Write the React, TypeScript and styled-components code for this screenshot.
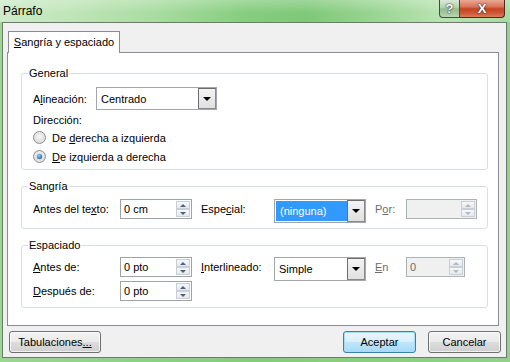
import React from 'react';
import styled, { createGlobalStyle, css } from 'styled-components';

const GlobalStyle = createGlobalStyle`
  html, body {
    margin: 0;
    padding: 0;
    background: #ffffff;
  }
  body {
    font-family: 'Liberation Sans', Arial, sans-serif;
    font-size: 11px;
    color: #000000;
  }
  * {
    box-sizing: border-box;
  }
`;

const Window = styled.div`
  width: 510px;
  height: 362px;
  display: flex;
  flex-direction: column;
  background: linear-gradient(to right, #9bd692, #84cb7d 50%, #92d189);
`;

const TitleBar = styled.div`
  height: 22px;
  display: flex;
  align-items: flex-start;
  padding-right: 5px;
  background:
    linear-gradient(to bottom, rgba(255, 255, 255, 0.25), rgba(255, 255, 255, 0) 60%),
    linear-gradient(
      to right,
      #cdebc8 0%,
      #bfe5b8 14%,
      #a9dca1 30%,
      #86cd7f 48%,
      #7ec878 60%,
      #9bd593 74%,
      #b8e3b1 86%,
      #a7db9f 100%
    );
`;

const Title = styled.div`
  flex: 1;
  padding: 4px 0 0 3px;
  font-size: 12px;
  color: #000000;
`;

const CaptionButton = styled.div<{ $close?: boolean }>`
  height: 18px;
  display: flex;
  align-items: center;
  justify-content: center;
  color: #ffffff;
  font-weight: bold;
  font-size: 13px;
  border: 1px solid #3e4f3c;
  border-top: none;
  text-shadow: 0 0 2px #2b2b2b, 0 0 1px #2b2b2b;
  ${(p) =>
    p.$close
      ? css`
          width: 45px;
          border-left: none;
          border-radius: 0 0 4px 0;
          border-color: #4a2a22;
          background: linear-gradient(to bottom, #e9a995 0%, #d8735a 40%, #c4451f 52%, #cf5b3a 80%, #de7c5f 100%);
        `
      : css`
          width: 21px;
          border-radius: 0 0 0 4px;
          background: linear-gradient(to bottom, #d9ead6 0%, #b3d2ae 45%, #94bc8f 52%, #a6c9a1 80%, #bad8b5 100%);
        `}
`;

const Client = styled.div`
  flex: 1;
  margin: 0 3px 4px 2px;
  border: 1px solid #6f7a6e;
  background: #f0f0f0;
  display: flex;
  flex-direction: column;
  padding: 8px 7px 0 4px;
`;

const TabStrip = styled.div`
  display: flex;
  padding-left: 1px;
`;

const Tab = styled.div`
  width: 112px;
  height: 22px;
  margin-bottom: -1px;
  position: relative;
  z-index: 1;
  background: #ffffff;
  border: 1px solid #898c95;
  border-bottom: none;
  display: flex;
  align-items: center;
  justify-content: center;
  padding-bottom: 1px;
`;

const Panel = styled.div`
  height: 274px;
  background: #ffffff;
  border: 1px solid #898c95;
  padding: 13px 10px 0 13px;
  display: flex;
  flex-direction: column;
  gap: 9px;
`;

const Group = styled.fieldset<{ $h: number }>`
  margin: 0;
  min-inline-size: 0;
  height: ${(p) => p.$h}px;
  border: 1px solid #d5dfe5;
  border-radius: 3px;
  padding: 0 8px 0 11px;
`;

const Legend = styled.legend`
  padding: 0 1px;
  margin-left: -5px;
  line-height: 14px;
`;

const Row = styled.div<{ $top?: number }>`
  display: flex;
  align-items: center;
  margin-top: ${(p) => p.$top ?? 0}px;
`;

const Label = styled.span<{ $w?: number; $disabled?: boolean }>`
  display: inline-block;
  width: ${(p) => (p.$w ? `${p.$w}px` : 'auto')};
  color: ${(p) => (p.$disabled ? '#6d6d6d' : '#000000')};
  white-space: nowrap;
`;

const U = styled.span`
  text-decoration: underline;
`;

const Combo = styled.div<{ $w: number; $h: number }>`
  width: ${(p) => p.$w}px;
  height: ${(p) => p.$h}px;
  display: flex;
  border: 1px solid #a3a7ab;
  background: #ffffff;
`;

const ComboText = styled.div<{ $selected?: boolean }>`
  flex: 1;
  display: flex;
  align-items: center;
  padding-left: 4px;
  ${(p) =>
    p.$selected &&
    css`
      background: #3399ff;
      color: #ffffff;
      margin: 1px 0 1px 1px;
    `}
`;

const ComboButton = styled.div`
  width: 18px;
  display: flex;
  align-items: center;
  justify-content: center;
  border: 1px solid #6d6d6d;
  border-right-color: #8a8a8a;
  border-bottom-color: #8a8a8a;
  background: linear-gradient(to bottom, #f4f4f4, #e0e0e0);

  &::after {
    content: '';
    border-left: 4px solid transparent;
    border-right: 4px solid transparent;
    border-top: 4px solid #000000;
  }
`;

const Spin = styled.div<{ $w: number; $disabled?: boolean }>`
  width: ${(p) => p.$w}px;
  height: 20px;
  display: flex;
  border: 1px solid ${(p) => (p.$disabled ? '#adb2b5' : '#9ea3a8')};
  background: ${(p) => (p.$disabled ? '#f0f0f0' : '#ffffff')};
  color: ${(p) => (p.$disabled ? '#6d6d6d' : '#000000')};
`;

const SpinValue = styled.div`
  flex: 1;
  display: flex;
  align-items: center;
  padding-left: 3px;
`;

const SpinButtons = styled.div`
  width: 15px;
  display: flex;
  flex-direction: column;
  padding: 1px 1px 1px 0;
`;

const SpinArrow = styled.div<{ $down?: boolean; $disabled?: boolean }>`
  flex: 1;
  display: flex;
  align-items: center;
  justify-content: center;
  border: 1px solid #c9cfd6;
  background: linear-gradient(to bottom, #f7f8fa, #e4e8ed);

  &::after {
    content: '';
    border-left: 3px solid transparent;
    border-right: 3px solid transparent;
    ${(p) =>
      p.$down
        ? css`border-top: 3px solid ${p.$disabled ? '#b4b8bd' : '#4d6185'};`
        : css`border-bottom: 3px solid ${p.$disabled ? '#b4b8bd' : '#4d6185'};`}
  }
`;

const RadioRow = styled.div<{ $top: number }>`
  display: flex;
  align-items: center;
  margin-top: ${(p) => p.$top}px;
  gap: 6px;
`;

const RadioCircle = styled.span<{ $checked?: boolean }>`
  width: 13px;
  height: 13px;
  border-radius: 50%;
  border: 1px solid #8e8f8f;
  background: radial-gradient(circle at 50% 40%, #f4f4f4, #d6d6d6);
  display: flex;
  align-items: center;
  justify-content: center;

  ${(p) =>
    p.$checked &&
    css`
      &::after {
        content: '';
        width: 5px;
        height: 5px;
        border-radius: 50%;
        background: radial-gradient(circle at 40% 35%, #8fd6ff, #1c6fb5 70%, #144f86);
        box-shadow: 0 0 1px #1a5da0;
      }
    `}
`;

const Grid = styled.div<{ $top: number }>`
  display: grid;
  grid-template-columns: 87px 81px 73px 101px 31px auto;
  grid-auto-rows: 20px;
  row-gap: 4px;
  align-items: start;
  margin-top: ${(p) => p.$top}px;
`;

const Cell = styled.div`
  height: 20px;
  display: flex;
  align-items: center;
`;

const Footer = styled.div`
  flex: 1;
  display: flex;
  align-items: flex-start;
  padding: 5px 0 0 2px;
  margin-right: -2px;
  gap: 12px;
`;

const Button = styled.button<{ $w: number; $default?: boolean; $push?: boolean }>`
  width: ${(p) => p.$w}px;
  height: 22px;
  font-family: inherit;
  font-size: 11px;
  color: #000000;
  border: 1px solid #707070;
  border-radius: 3px;
  padding: 0 0 1px;
  margin-left: ${(p) => (p.$push ? 'auto' : '0')};
  background: linear-gradient(to bottom, #f2f2f2 0%, #ebebeb 48%, #dddddd 52%, #cfcfcf 100%);
  box-shadow: inset 0 0 0 1px rgba(255, 255, 255, 0.7);
  ${(p) =>
    p.$default &&
    css`
      border-color: #3c7fb1;
      box-shadow: inset 0 0 0 1px #a6dcf5;
      background: linear-gradient(to bottom, #eaf6fd 0%, #d9f0fc 48%, #bee6fd 52%, #a7d9f5 100%);
    `}
`;

type SpinBoxProps = { value: string; width: number; disabled?: boolean };

const SpinBox = ({ value, width, disabled }: SpinBoxProps) => (
  <Spin $w={width} $disabled={disabled}>
    <SpinValue>{value}</SpinValue>
    <SpinButtons>
      <SpinArrow $disabled={disabled} />
      <SpinArrow $down $disabled={disabled} />
    </SpinButtons>
  </Spin>
);

type ComboBoxProps = { value: string; width: number; height: number; selected?: boolean };

const ComboBox = ({ value, width, height, selected }: ComboBoxProps) => (
  <Combo $w={width} $h={height}>
    <ComboText $selected={selected}>{value}</ComboText>
    <ComboButton />
  </Combo>
);

const App = () => {
  return (
    <Window>
      <GlobalStyle />
      <TitleBar>
        <Title>Párrafo</Title>
        <CaptionButton>?</CaptionButton>
        <CaptionButton $close>X</CaptionButton>
      </TitleBar>
      <Client>
        <TabStrip>
          <Tab>
            <span>
              <U>S</U>angría y espaciado
            </span>
          </Tab>
        </TabStrip>
        <Panel>
          <Group $h={104}>
            <Legend>General</Legend>
            <Row $top={7}>
              <Label $w={63}>
                A<U>l</U>ineación:
              </Label>
              <ComboBox value="Centrado" width={121} height={23} />
            </Row>
            <Row $top={4}>
              <Label>Dirección:</Label>
            </Row>
            <RadioRow $top={5}>
              <RadioCircle />
              <Label>
                De <U>d</U>erecha a izquierda
              </Label>
            </RadioRow>
            <RadioRow $top={6}>
              <RadioCircle $checked />
              <Label>
                <U>D</U>e izquierda a derecha
              </Label>
            </RadioRow>
          </Group>
          <Group $h={50}>
            <Legend>Sangría</Legend>
            <Grid $top={6}>
              <Cell>
                <Label>
                  Antes del te<U>x</U>to:
                </Label>
              </Cell>
              <SpinBox value="0 cm" width={72} />
              <Cell>
                <Label>
                  Espe<U>c</U>ial:
                </Label>
              </Cell>
              <ComboBox value="(ninguna)" width={92} height={24} selected />
              <Cell>
                <Label $disabled>
                  P<U>o</U>r:
                </Label>
              </Cell>
              <SpinBox value="" width={71} disabled />
            </Grid>
          </Group>
          <Group $h={70}>
            <Legend>Espaciado</Legend>
            <Grid $top={5}>
              <Cell>
                <Label>
                  <U>A</U>ntes de:
                </Label>
              </Cell>
              <SpinBox value="0 pto" width={72} />
              <Cell>
                <Label>
                  <U>I</U>nterlineado:
                </Label>
              </Cell>
              <ComboBox value="Simple" width={92} height={24} />
              <Cell>
                <Label $disabled>
                  <U>E</U>n
                </Label>
              </Cell>
              <SpinBox value="0" width={59} disabled />
              <Cell>
                <Label>
                  <U>D</U>espués de:
                </Label>
              </Cell>
              <SpinBox value="0 pto" width={72} />
            </Grid>
          </Group>
        </Panel>
        <Footer>
          <Button $w={92}>
            Tabulaciones<U>...</U>
          </Button>
          <Button $w={73} $default $push>
            Aceptar
          </Button>
          <Button $w={73}>Cancelar</Button>
        </Footer>
      </Client>
    </Window>
  );
};

export default App;
